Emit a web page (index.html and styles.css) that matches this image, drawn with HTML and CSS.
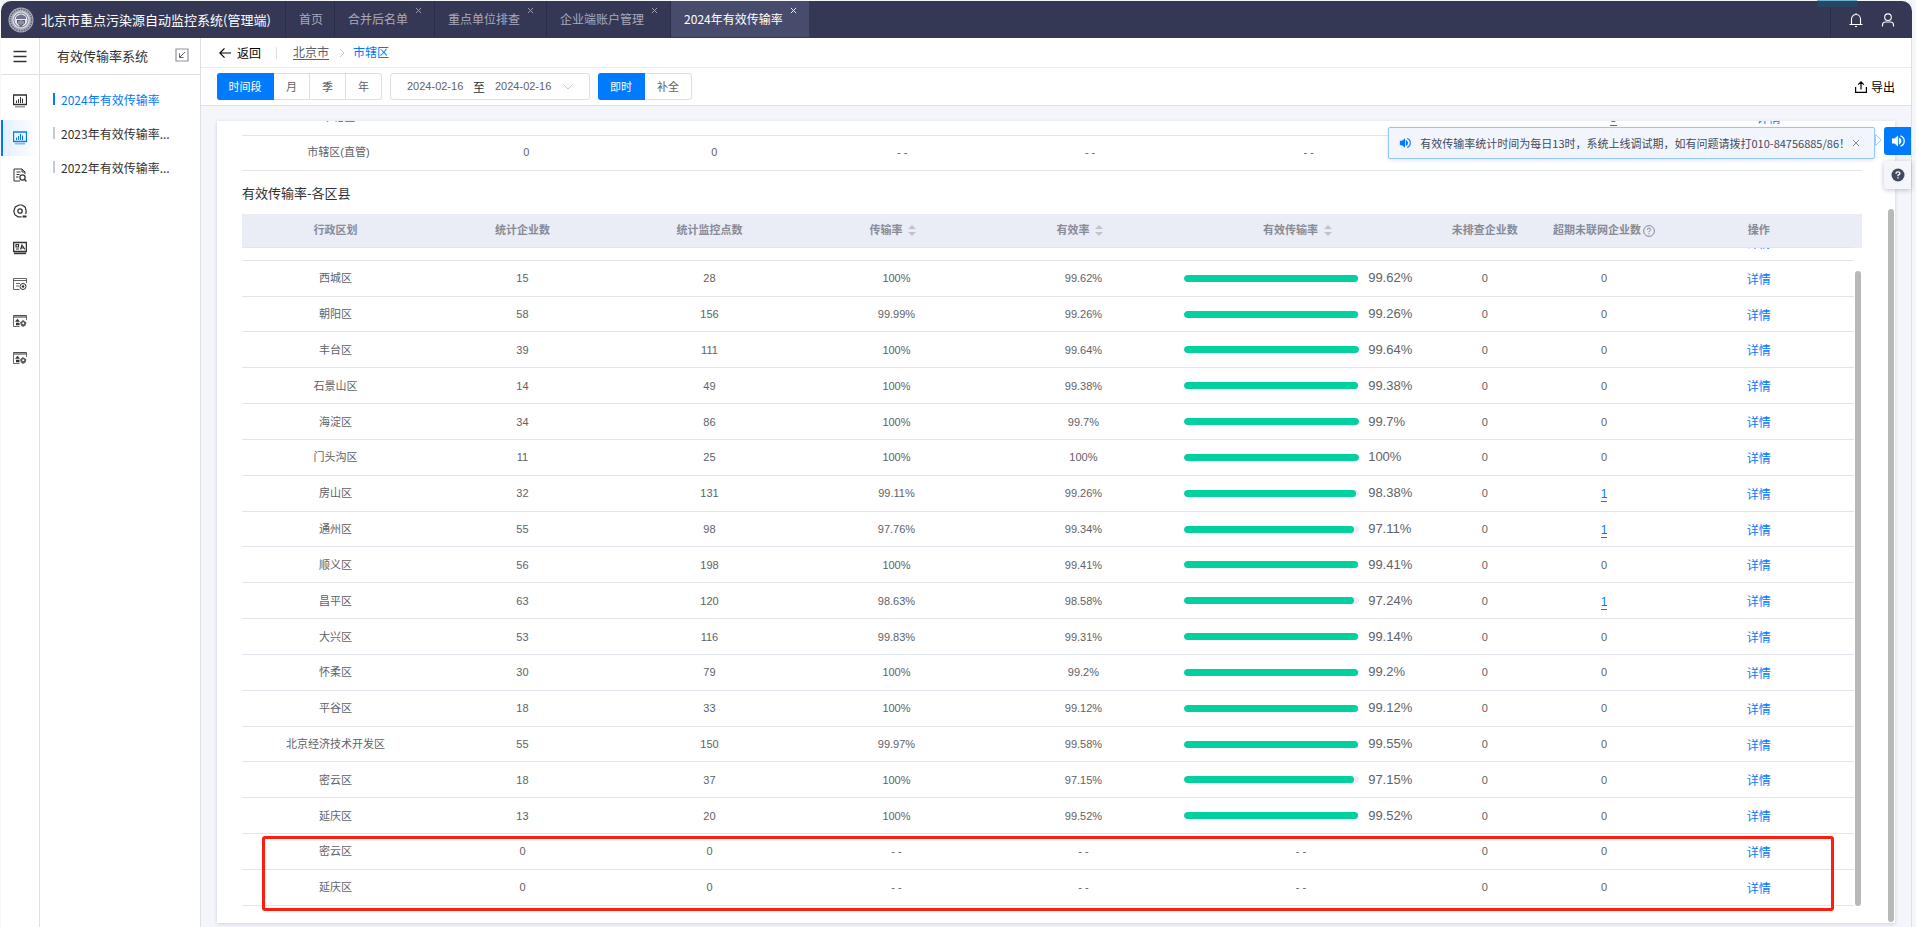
FILE: index.html
```html
<!DOCTYPE html>
<html lang="zh-CN">
<head>
<meta charset="utf-8">
<title>北京市重点污染源自动监控系统(管理端)</title>
<link rel="stylesheet" href="styles.css">
</head>
<body>
<svg class="sprite" aria-hidden="true">
  <symbol id="i-chart" viewBox="0 0 14 14"><path d="M.5 1h13v9.500H.5z" fill="none" stroke="currentColor" stroke-width="1.300"/><path d="M3.500 9V6.500M5.500 9V5M7.500 9V3M9.500 9V4.500" stroke="currentColor"/><path d="M2 12.800h10" stroke="currentColor" stroke-width="1.200" opacity=".6"/></symbol>
  <symbol id="i-search" viewBox="0 0 14 14"><path d="M7 13H1V1h8l3 3v2M3.500 4h4M3.500 6.500h3M3 9h2.500M9 1v3h3" fill="none" stroke="currentColor"/><circle cx="9.500" cy="9.500" r="2.600" fill="none" stroke="currentColor" stroke-width="1.200"/><path d="M11.500 11.500L13.500 13.500" stroke="currentColor" stroke-width="1.200"/></symbol>
  <symbol id="i-at" viewBox="0 0 14 14"><path d="M8.500 12.800H5L1.800 10.700.8 7l1.500-4L6 1h3l3.200 2.200L13.200 7l-.4 3" fill="none" stroke="currentColor" stroke-width="1.200"/><circle cx="7" cy="7" r="2.200" fill="none" stroke="currentColor" stroke-width="1.300"/><path d="M9.500 12.500h4" stroke="currentColor" stroke-width="2"/></symbol>
  <symbol id="i-card" viewBox="0 0 14 14"><path d="M.6 1.500h12.800v9H.6z" fill="none" stroke="currentColor" stroke-width="1.300"/><path d="M3 3.500h2.500V6H3zM3 8h3M7.500 8.500L9 4l3 4.500M8 7h3" fill="none" stroke="currentColor" stroke-width="1.200"/><path d="M1 12.400h12" stroke="currentColor" stroke-width="1.600"/></symbol>
  <symbol id="i-list" viewBox="0 0 14 14"><path d="M6.500 12.500H.5v-11h13V6M.5 3.500h13M3 6.500h4M3 9h3" fill="none" stroke="currentColor" opacity=".75"/><circle cx="10" cy="9.500" r="3" fill="none" stroke="currentColor"/><circle cx="10" cy="9.500" r="1.300" fill="currentColor"/></symbol>
  <symbol id="i-gear" viewBox="0 0 14 14"><path d="M.5 1h13v3H.5z" fill="currentColor" opacity=".5"/><path d="M6.500 12.500H.5v-11h13V6" fill="none" stroke="currentColor" opacity=".7"/><path d="M2 7.800l2.500-3 2.500 3zM3 8.800h3.500v2.400H3z" fill="currentColor"/><path d="M7 8.500l3-2.500 3.500 2.500-1 3-2.500 1.500-2-1.500z" fill="currentColor" opacity=".8"/><circle cx="10.200" cy="9.300" r="1" fill="#fff"/></symbol>
  <symbol id="i-x" viewBox="0 0 8 8"><path d="M1 1l6 6M7 1L1 7" stroke="currentColor" fill="none"/></symbol>
  <symbol id="i-speaker" viewBox="0 0 14 14"><path d="M1 4.500h2.500L7 1.500v11L3.500 9.500H1z" fill="currentColor"/><path d="M8.500 4.500a3 3 0 0 1 0 5zM9.500 1.800a5.500 5.500 0 0 1 0 10.400" fill="none" stroke="currentColor" stroke-width="1.300"/></symbol>
  <symbol id="i-down" viewBox="0 0 10 6"><path d="M.5.500L5 5 9.500.500" fill="none" stroke="currentColor"/></symbol>
</svg>

<div class="window">
  <header class="topbar">
    <div class="brand">
      <svg class="logo" viewBox="0 0 26 26"><circle cx="13" cy="13" r="12.500" fill="#a9abba"/><circle cx="13" cy="13" r="10.700" fill="none" stroke="#5c5f78" stroke-width="1.400" stroke-dasharray="1.500 1"/><circle cx="13" cy="13" r="8.500" fill="#e6e7ec"/><circle cx="13" cy="13" r="7" fill="none" stroke="#777a90" stroke-width="1"/><path d="M8 10q5-5 10 0v2H8z" fill="#70738a"/><path d="M9 13h8v3l-4 4-4-4z" fill="#565a75"/><path d="M13 13v5M11 14v3M15 14v3" stroke="#dcdde5" stroke-width=".8"/></svg>
      <h1 class="brand-name">北京市重点污染源自动监控系统(管理端)</h1>
    </div>
    <nav class="tabs">
      <a class="tab" href="#">首页</a>
      <a class="tab closable" href="#">合并后名单<svg class="tab-x"><use href="#i-x"/></svg></a>
      <a class="tab closable" href="#">重点单位排查<svg class="tab-x"><use href="#i-x"/></svg></a>
      <a class="tab closable" href="#">企业端账户管理<svg class="tab-x"><use href="#i-x"/></svg></a>
      <a class="tab closable active" href="#">2024年有效传输率<svg class="tab-x"><use href="#i-x"/></svg></a>
    </nav>
    <span class="handle"></span>
    <div class="user-tools">
      <button class="icon-btn" type="button" aria-label="消息"><svg class="ico" viewBox="0 0 14 14"><path d="M.5 11.500h13M2.500 11.500V6a4.500 4.500 0 0 1 9 0v5.500M7 .3v1.500M6 13.500h2" fill="none" stroke="#fff" stroke-width="1.100"/></svg></button>
      <button class="icon-btn" type="button" aria-label="用户"><svg class="ico" viewBox="0 0 14 14"><circle cx="7" cy="4.200" r="3.300" fill="none" stroke="#fff" stroke-width="1.100"/><path d="M1.500 13.500V12q0-3 3-3h5q3 0 3 3v1.500" fill="none" stroke="#fff" stroke-width="1.100"/></svg></button>
    </div>
  </header>

  <div class="body">
    <aside class="rail">
      <button class="menu-btn" type="button" aria-label="菜单"><svg class="ico" viewBox="0 0 14 14"><path d="M.5 2.500h13M.5 7.500h13M.5 12.500h13" stroke="#303133" stroke-width="1.400"/></svg></button>
      <nav class="rail-list">
        <a class="rail-item" href="#" aria-label="统计"><svg class="ico"><use href="#i-chart"/></svg></a>
        <a class="rail-item active" href="#" aria-label="传输率"><svg class="ico"><use href="#i-chart"/></svg></a>
        <a class="rail-item" href="#" aria-label="查询"><svg class="ico"><use href="#i-search"/></svg></a>
        <a class="rail-item" href="#" aria-label="监控"><svg class="ico"><use href="#i-at"/></svg></a>
        <a class="rail-item" href="#" aria-label="名单"><svg class="ico"><use href="#i-card"/></svg></a>
        <a class="rail-item" href="#" aria-label="配置"><svg class="ico"><use href="#i-list"/></svg></a>
        <a class="rail-item" href="#" aria-label="企业"><svg class="ico"><use href="#i-gear"/></svg></a>
        <a class="rail-item" href="#" aria-label="账户"><svg class="ico"><use href="#i-gear"/></svg></a>
      </nav>
    </aside>

    <aside class="panel">
      <div class="panel-head">
        <h2 class="panel-title">有效传输率系统</h2>
        <button class="icon-btn" type="button" aria-label="收起"><svg class="ico" viewBox="0 0 14 14"><path d="M1 1h12v12H1z" fill="none" stroke="#909399" stroke-width="1.200"/><path d="M10 4L4.500 9.500M4.500 5.500v4h4" fill="none" stroke="#606266"/></svg></button>
      </div>
      <nav class="panel-list">
        <a class="panel-item active" href="#">2024年有效传输率</a>
        <a class="panel-item" href="#">2023年有效传输率...</a>
        <a class="panel-item" href="#">2022年有效传输率...</a>
      </nav>
    </aside>

    <main class="main">
      <nav class="crumbs">
        <a class="back" href="#"><svg class="back-ico" viewBox="0 0 12 12"><path d="M.8 6H12M5.500 1.300L.8 6l4.700 4.700" fill="none" stroke="currentColor" stroke-width="1.200"/></svg>返回</a>
        <span class="crumb-line"></span>
        <a class="crumb" href="#">北京市</a>
        <svg class="crumb-next" viewBox="0 0 6 10"><path d="M1 1l4 4-4 4" fill="none" stroke="#c0c4cc"/></svg>
        <a class="crumb current" href="#">市辖区</a>
      </nav>

      <div class="filters">
        <div class="btn-group">
          <button class="btn wide active" type="button">时间段</button>
          <button class="btn" type="button">月</button>
          <button class="btn" type="button">季</button>
          <button class="btn" type="button">年</button>
        </div>
        <div class="range">
          <input class="date" type="text" value="2024-02-16" aria-label="开始日期">
          <span class="to">至</span>
          <input class="date" type="text" value="2024-02-16" aria-label="结束日期">
          <svg class="range-ico"><use href="#i-down"/></svg>
        </div>
        <div class="btn-group">
          <button class="btn mid active" type="button">即时</button>
          <button class="btn mid" type="button">补全</button>
        </div>
        <button class="export" type="button"><svg class="export-ico" viewBox="0 0 12 12"><path d="M.6 6v5.300h10.800V6M6 8.500V1M3.200 3.600L6 .9l2.800 2.700" fill="none" stroke="currentColor" stroke-width="1.200"/></svg>导出</button>
      </div>

      <section class="card">
        <div class="clip top-clip">
          <table class="grid city">
            <colgroup><col class="c-m"><col class="c-m"><col class="c-m"><col class="c-m"><col class="c-m"><col class="c-l"><col class="c-s"><col class="c-s"><col></colgroup>
            <tbody id="city-rows"></tbody>
          </table>
        </div>
        <h3 class="section-title">有效传输率-各区县</h3>
        <div class="head-wrap">
          <table class="grid head">
            <colgroup><col class="c-m"><col class="c-m"><col class="c-m"><col class="c-m"><col class="c-m"><col class="c-l"><col class="c-s"><col class="c-s"><col></colgroup>
            <thead>
              <tr>
                <th>行政区划</th><th>统计企业数</th><th>统计监控点数</th>
                <th>传输率<span class="sort"></span></th>
                <th>有效率<span class="sort"></span></th>
                <th>有效传输率<span class="sort"></span></th>
                <th>未排查企业数</th>
                <th>超期未联网企业数<svg class="q-ico" viewBox="0 0 12 12"><circle cx="6" cy="6" r="5.400" fill="none" stroke="#878b96"/><path d="M4.300 4.800q0-1.700 1.700-1.700t1.700 1.400Q7.700 5.500 6 6.300v.9M6 8.200v1.100" fill="none" stroke="#878b96"/></svg></th>
                <th>操作</th>
              </tr>
            </thead>
          </table>
        </div>
        <div class="clip body-clip">
          <table class="grid districts">
            <colgroup><col class="c-m"><col class="c-m"><col class="c-m"><col class="c-m"><col class="c-m"><col class="c-l"><col class="c-s"><col class="c-s"><col></colgroup>
            <tbody id="district-rows"></tbody>
          </table>
          <span class="thumb inner"></span>
        </div>
        <span class="thumb outer"></span>
        <span class="mark"></span>
      </section>

      <div class="notice" role="status">
        <svg class="notice-ico"><use href="#i-speaker"/></svg>
        <span class="notice-text">有效传输率统计时间为每日13时，系统上线调试期，如有问题请拨打010-84756885/86！</span>
        <button class="icon-btn notice-x" type="button" aria-label="关闭"><svg class="x-ico"><use href="#i-x"/></svg></button>
        <svg class="notice-arrow" viewBox="0 0 7 12"><path d="M.5.500L6.300 6 .5 11.500z" fill="#fff" stroke="#9cceff"/></svg>
      </div>
      <div class="floats">
        <button class="float blue" type="button" aria-label="公告"><svg class="ico"><use href="#i-speaker"/></svg></button>
        <button class="float" type="button" aria-label="帮助"><svg class="ico" viewBox="0 0 14 14"><circle cx="7" cy="7" r="6.500" fill="#434a60"/><path d="M5 5.700Q5 3.800 7 3.800t2 1.500Q9 6.400 7 7.200v1M7 9.200v1.400" fill="none" stroke="#fff" stroke-width="1.300"/></svg></button>
      </div>
    </main>
  </div>
</div>
<script src="app.js"></script>
</body>
</html>
```
FILE: styles.css
```css
* { box-sizing: border-box; }

body {
  margin: 0;
  background: #f5f6f7;
  color: #606266;
  font-family: "Noto Sans CJK SC", "Liberation Sans", sans-serif;
  font-size: 12px;
}

a { color: inherit; text-decoration: none; }
h1, h2, h3 { margin: 0; font-weight: 400; }
button, input { font: inherit; color: inherit; }

.sprite { position: absolute; width: 0; height: 0; }
.ico { width: 14px; height: 14px; display: block; }
.icon-btn { padding: 0; border: 0; background: none; display: flex; }

.window {
  height: 100vh;
  padding: 1px 4px 0 1px;
  display: flex;
  flex-direction: column;
  overflow: hidden;
}

/* top bar */
.topbar {
  position: relative;
  display: flex;
  height: 37px;
  flex: none;
  background: #353854;
  border-radius: 10px 10px 0 0;
}
.brand {
  width: 285px;
  padding-left: 7px;
  display: flex;
  align-items: center;
  gap: 7px;
  border-right: 1px solid #2b2e48;
}
.logo { width: 26px; height: 26px; }
.brand-name { font-size: 13px; color: #fff; white-space: nowrap; }
.tabs { display: flex; padding-bottom: 1px; }
.tab {
  display: flex;
  align-items: center;
  padding: 0 11px 2px 13px;
  border-right: 1px solid #2b2e48;
  color: #a9abba;
  white-space: nowrap;
}
.tab.closable { padding-right: 12px; gap: 7px; }
.tab-x { width: 7px; height: 7px; align-self: flex-start; margin-top: 6px; }
.tab.active { background: #474c6c; color: #fff; border-right: 0; }
.user-tools {
  margin-left: auto;
  width: 82px;
  display: flex;
  align-items: center;
  justify-content: center;
  gap: 18px;
  border-left: 1px solid #2b2e48;
}
.handle {
  position: absolute;
  right: 55px;
  top: -1px;
  width: 40px;
  height: 7px;
  background: #264663;
  border-top: 1px solid #6fb0cc;
}

/* side navigation */
.body { display: flex; flex: 1; min-height: 0; border-right: 1px solid #dcdfe6; background: #fff; }
.rail { width: 39px; flex: none; border-right: 1px solid #dcdfe6; }
.menu-btn {
  width: 100%;
  height: 37px;
  padding: 0;
  border: 0;
  border-bottom: 1px solid #dcdfe6;
  background: none;
  display: flex;
  align-items: center;
  justify-content: center;
}
.rail-list { display: flex; flex-direction: column; margin-top: 8px; height: 293px; }
.rail-item {
  flex: 1;
  display: flex;
  align-items: center;
  justify-content: center;
  color: #303133;
}
.rail-item.active {
  color: #007aff;
  background: linear-gradient(90deg, #e2efff, #fff);
  box-shadow: inset 2px 0 #007aff;
}
.panel { width: 161px; flex: none; border-right: 1px solid #dcdfe6; }
.panel-head {
  height: 37px;
  padding: 0 11px 2px 17px;
  display: flex;
  align-items: center;
  justify-content: space-between;
  border-bottom: 1px solid #dcdfe6;
}
.panel-title { font-size: 13px; color: #303133; }
.panel-list { padding: 7px 0 0 13px; }
.panel-item { height: 34px; display: flex; align-items: center; gap: 6px; color: #303133; }
.panel-item::before { content: ""; width: 2px; height: 12px; background: #c8c9cc; }
.panel-item.active { color: #007aff; }
.panel-item.active::before { background: #007aff; }

/* main area */
.main {
  position: relative;
  flex: 1;
  min-width: 0;
  display: flex;
  flex-direction: column;
  background: #f4f6fb;
}
.crumbs {
  height: 30px;
  padding-left: 18px;
  display: flex;
  align-items: center;
  background: #fff;
  border-bottom: 1px solid #ebedf2;
}
.back { display: flex; align-items: center; gap: 6px; color: #000; }
.back-ico { width: 12px; height: 12px; }
.crumb-line { width: 1px; height: 12px; margin: 0 16px 0 15px; background: #dcdfe6; }
.crumb { line-height: 14px; border-bottom: 1px solid #606266; }
.crumb.current { color: #007aff; border-color: transparent; }
.crumb-next { width: 6px; height: 10px; margin: 0 8px 0 10px; }
.filters {
  height: 38px;
  padding: 0 16px;
  display: flex;
  align-items: center;
  gap: 8px;
  background: #fff;
  border-bottom: 1px solid #dcdfe6;
}
.btn-group { display: flex; }
.btn {
  width: 36px;
  height: 27px;
  padding: 0 0 2px;
  border: 1px solid #dcdfe6;
  border-left: 0;
  background: #fff;
  font-size: 11px;
}
.btn.mid { width: 47px; }
.btn.wide { width: 57px; }
.btn.active { background: #007aff; border-color: #007aff; color: #fff; }
.btn:first-child { border-radius: 3px 0 0 3px; }
.btn:last-child { border-radius: 0 3px 3px 0; }
.range {
  height: 27px;
  padding: 0 16px;
  display: flex;
  align-items: center;
  border: 1px solid #dcdfe6;
  border-radius: 3px;
}
.date {
  width: 60px;
  padding: 0 0 1px;
  border: 0;
  background: none;
  outline: 0;
  font-family: "Liberation Sans", sans-serif;
  font-size: 11px;
}
.to { width: 28px; text-align: center; padding-right: 4px; color: #303133; }
.range-ico { width: 10px; height: 6px; margin-left: 8px; color: #c0c4cc; }
.export {
  margin-left: auto;
  padding: 0;
  border: 0;
  background: none;
  display: flex;
  align-items: center;
  gap: 4px;
  color: #000;
}
.export-ico { width: 12px; height: 12px; }

/* data card */
.card {
  position: relative;
  flex: 1;
  min-height: 0;
  margin: 15px 16px 4px;
  padding: 0 33px 17px 25px;
  display: flex;
  flex-direction: column;
  background: #fff;
  box-shadow: 0 1px 4px rgba(0, 21, 80, .16);
}
.clip { position: relative; display: flex; flex-direction: column; justify-content: flex-end; overflow: hidden; }
.top-clip { height: 50px; flex: none; }
.body-clip { flex: 1; min-height: 0; padding-right: 8px; }
.head-wrap { padding-right: 8px; background: #eaedf5; }
.section-title { height: 43px; flex: none; line-height: 43px; font-size: 13px; color: #303133; }
.grid { width: 100%; flex: none; table-layout: fixed; border-collapse: separate; border-spacing: 0; }
.districts { height: 681px; }
.c-m { width: 11.6%; }
.c-l { width: 15.4%; }
.c-s { width: 7.4%; }
.grid td, .grid th {
  height: 35px;
  padding: 0;
  border-bottom: 1px solid #e3e5ec;
  text-align: center;
  font-family: "Liberation Sans", "Noto Sans CJK SC", sans-serif;
  font-size: 11px;
  line-height: 16px;
  white-space: nowrap;
}
.grid.city td { padding: 0 0 2px 5px; }
.grid th { height: 34px; padding-bottom: 2px; color: #878b96; font-weight: 700; }
.sort { display: inline-flex; flex-direction: column; gap: 3px; margin: 0 7px 0 6px; vertical-align: middle; }
.sort::before, .sort::after { content: ""; border: 4px solid transparent; }
.sort::before { border-top: 0; border-bottom-color: #c0c4cc; }
.sort::after { border-bottom: 0; border-top-color: #c0c4cc; }
.q-ico { width: 12px; height: 12px; margin-left: 2px; vertical-align: middle; }
.progress { display: flex; align-items: center; gap: 9px; padding: 0 7px; }
.track { flex: 1; height: 7px; border-radius: 4px; background: #ebeef5; overflow: hidden; }
.fill { display: block; height: 100%; border-radius: 4px; background: #00d19f; }
.rate { width: 50px; text-align: left; font-size: 13px; }
.link { display: inline-block; padding-top: 3px; vertical-align: middle; font-size: 12px; color: #007aff; }
.count { line-height: 14px; border-bottom: 1px solid #007aff; }

.thumb { position: absolute; width: 6px; border-radius: 3px; background: #b8b8b8; }
.thumb.inner { right: 1px; top: 23px; bottom: 0; }
.thumb.outer { right: 1px; top: 88px; bottom: 1px; }
.mark {
  position: absolute;
  left: 45px;
  right: 61px;
  bottom: 12px;
  height: 75px;
  border: 3px solid #ff1d0f;
  border-radius: 3px;
}

/* floating notice */
.notice {
  position: absolute;
  top: 89px;
  right: 36px;
  height: 32px;
  padding: 0 14px 0 10px;
  display: flex;
  align-items: center;
  background: #f2f6fc;
  border: 1px solid #93c8ff;
  border-radius: 2px;
  box-shadow: 0 1px 4px rgba(0, 80, 160, .15);
  color: #434a60;
  font-size: 11px;
  white-space: nowrap;
}
.notice-ico { width: 12px; height: 12px; margin-right: 9px; color: #007aff; }
.notice-x { color: #878b96; margin-left: 2px; }
.x-ico { width: 8px; height: 8px; }
.notice-arrow { position: absolute; right: -8px; top: 6px; width: 7px; height: 12px; }
.floats { position: absolute; top: 89px; right: 0; display: flex; flex-direction: column; gap: 6px; }
.float {
  width: 27px;
  height: 28px;
  padding: 0;
  border: 0;
  border-radius: 3px 0 0 3px;
  display: flex;
  align-items: center;
  justify-content: center;
  background: #f4f6fb;
  box-shadow: 0 1px 5px rgba(0, 21, 80, .25);
}
.float.blue { background: #007aff; color: #fff; box-shadow: none; }
```
FILE: app.js
```js
const cityRows = [
  ["市辖区", "", "", "", "", "", "", 3],
  ["市辖区(直管)", 0, 0, "- -", "- -", null, 0, 0]
];

const districtRows = [
  ["", "", "", "", "", "", "", ""],
  ["西城区", 15, 28, "100%", "99.62%", 99.62, 0, 0],
  ["朝阳区", 58, 156, "99.99%", "99.26%", 99.26, 0, 0],
  ["丰台区", 39, 111, "100%", "99.64%", 99.64, 0, 0],
  ["石景山区", 14, 49, "100%", "99.38%", 99.38, 0, 0],
  ["海淀区", 34, 86, "100%", "99.7%", 99.7, 0, 0],
  ["门头沟区", 11, 25, "100%", "100%", 100, 0, 0],
  ["房山区", 32, 131, "99.11%", "99.26%", 98.38, 0, 1],
  ["通州区", 55, 98, "97.76%", "99.34%", 97.11, 0, 1],
  ["顺义区", 56, 198, "100%", "99.41%", 99.41, 0, 0],
  ["昌平区", 63, 120, "98.63%", "98.58%", 97.24, 0, 1],
  ["大兴区", 53, 116, "99.83%", "99.31%", 99.14, 0, 0],
  ["怀柔区", 30, 79, "100%", "99.2%", 99.2, 0, 0],
  ["平谷区", 18, 33, "100%", "99.12%", 99.12, 0, 0],
  ["北京经济技术开发区", 55, 150, "99.97%", "99.58%", 99.55, 0, 0],
  ["密云区", 18, 37, "100%", "97.15%", 97.15, 0, 0],
  ["延庆区", 13, 20, "100%", "99.52%", 99.52, 0, 0],
  ["密云区", 0, 0, "- -", "- -", null, 0, 0],
  ["延庆区", 0, 0, "- -", "- -", null, 0, 0]
];

function progress(rate) {
  if (rate === "") return "";
  if (rate === null) return "- -";
  return `<div class="progress"><span class="track"><span class="fill" style="width:${rate}%"></span></span><span class="rate">${rate}%</span></div>`;
}

function row(r) {
  const overdue = r[7] ? `<a class="link count" href="#">${r[7]}</a>` : r[7];
  return `<tr>${r.slice(0, 5).map(v => `<td>${v}</td>`).join("")}` +
    `<td>${progress(r[5])}</td><td>${r[6]}</td><td>${overdue}</td>` +
    `<td><a class="link" href="#">详情</a></td></tr>`;
}

document.getElementById("city-rows").innerHTML = cityRows.map(row).join("");
document.getElementById("district-rows").innerHTML = districtRows.map(row).join("");
```
